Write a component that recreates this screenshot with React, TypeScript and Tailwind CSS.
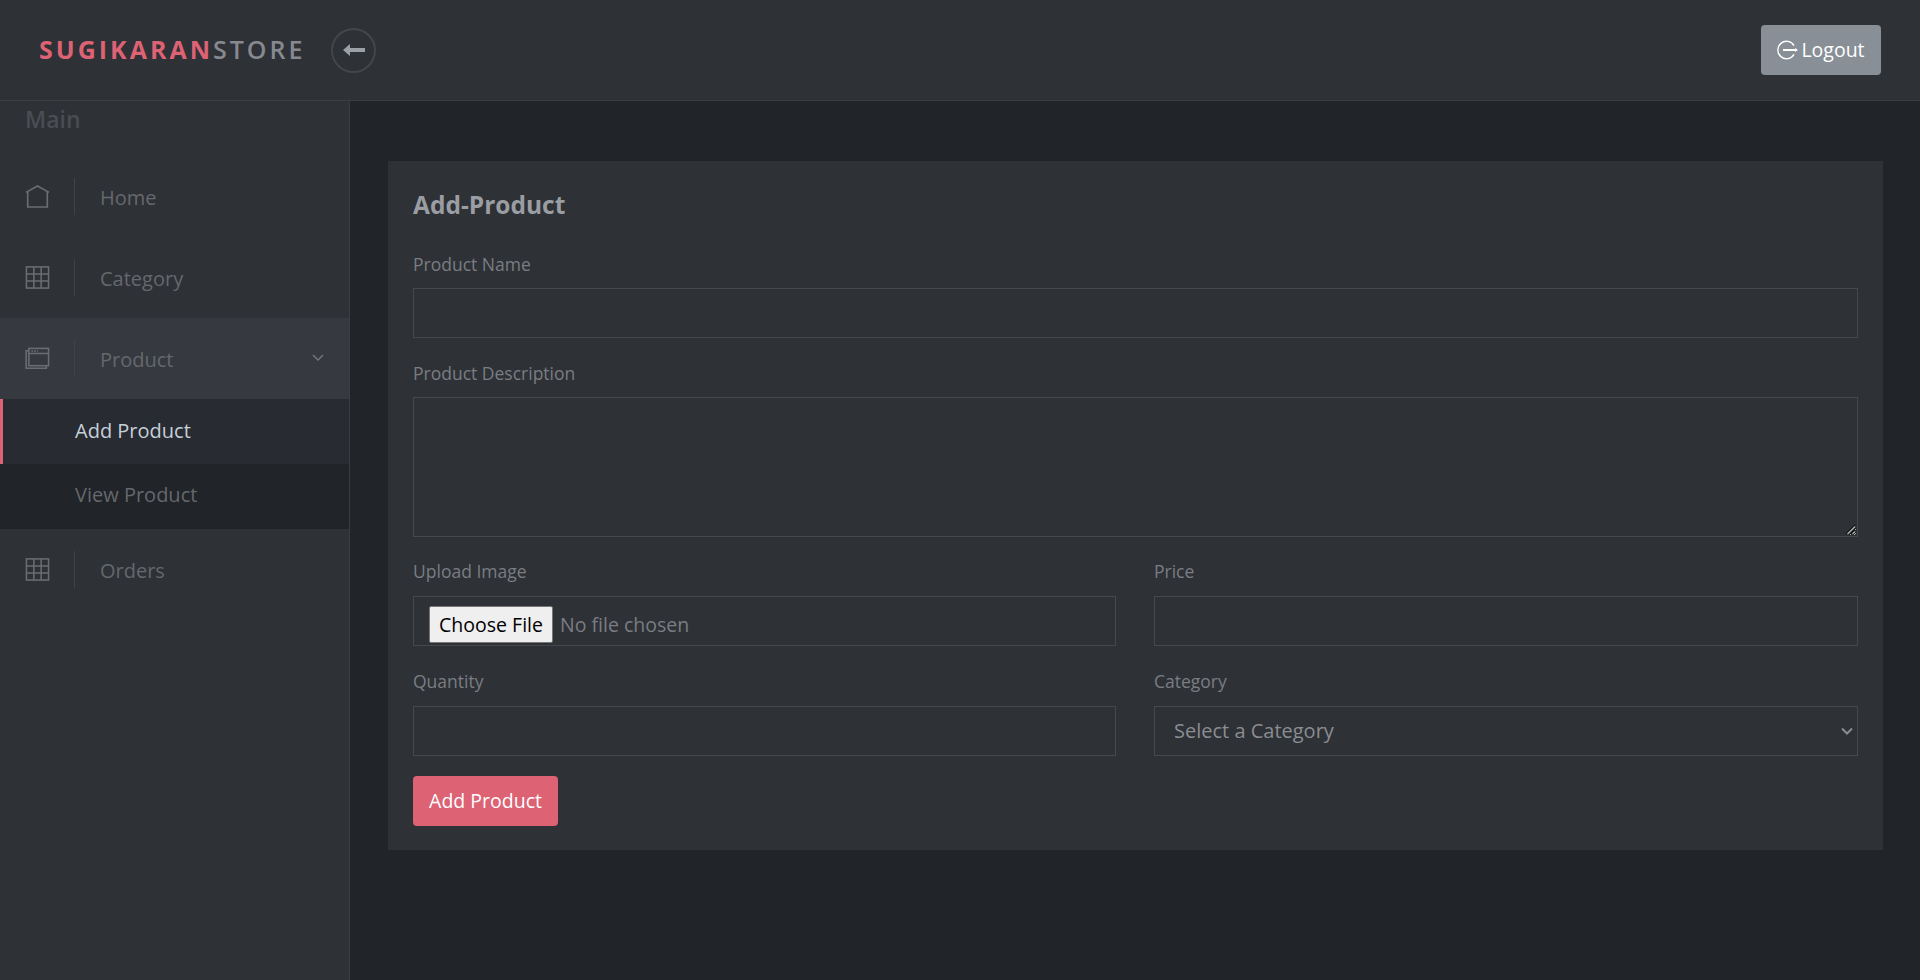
function HomeIcon() {
  return (
    <svg width="26" height="26" viewBox="0 0 26 26" fill="none" stroke="#6a6d72" strokeWidth="1.7">
      <path d="M1 9.2 13 2.6l12 6.6" />
      <path d="M2.8 8.2V24.4h20.4V8.2" />
    </svg>
  )
}

function GridIcon() {
  return (
    <svg width="26" height="26" viewBox="0 0 26 26" fill="none" stroke="#6a6d72" strokeWidth="1.6">
      <rect x="1.5" y="2.5" width="23" height="22" />
      <path d="M9.2 2.5v22M16.8 2.5v22M1.5 9.8h23M1.5 17.2h23" />
    </svg>
  )
}

function WindowsIcon() {
  return (
    <svg width="26" height="26" viewBox="0 0 26 26" fill="none" stroke="#6a6d72" strokeWidth="1.6">
      <rect x="4" y="3" width="20.5" height="18" />
      <path d="M4 8.3h20.5" />
      <path d="M6.5 5.7h7" strokeDasharray="2 1" />
      <path d="M4 5.5H1.2V23.7h21V21" />
    </svg>
  )
}

function NavRow({ icon, label, active, chevron }: { icon: React.ReactNode; label: string; active?: boolean; chevron?: boolean }) {
  return (
    <div className={`flex h-[81px] items-center px-[25px] ${active ? 'bg-[#363940]' : ''}`}>
      <span className="flex w-[25px] -translate-y-px justify-center">{icon}</span>
      <span className="ml-[24px] h-[37px] w-px bg-[#3f4247]" />
      <span className="ml-[25px] flex-1 translate-y-px text-[20px] text-[#65686d]">{label}</span>
      {chevron && (
        <svg width="12" height="8" viewBox="0 0 12 8" fill="none" stroke="#74777c" strokeWidth="1.4" className="-translate-y-px">
          <path d="M1 1l5 5 5-5" />
        </svg>
      )}
    </div>
  )
}

function Field({ label, className, children }: { label: string; className?: string; children: React.ReactNode }) {
  return (
    <div className={className}>
      <label className="mb-[10px] block h-[27px] text-[17.5px] leading-[27px] text-[#7a7d83]">{label}</label>
      {children}
    </div>
  )
}

const inputClass = 'block h-[50px] w-full border border-[#45484d] bg-transparent px-[20px] text-[19.5px] text-[#8a8d92] outline-none'

export default function App() {
  return (
    <div className="flex h-[980px] flex-col overflow-hidden bg-[#212428] font-['Open_Sans','Noto_Sans',sans-serif]">
      <header className="flex h-[101px] shrink-0 items-center justify-between border-b border-[#3a3d42] bg-[#2e3136] pl-[39px] pr-[39px]">
        <div className="flex items-center">
          <span className="w-[266px] whitespace-nowrap text-[25px] font-bold tracking-[3px] text-[#dc6274]">
            SUGIKARAN<span className="font-semibold text-[#868a90]">STORE</span>
          </span>
          <button className="ml-[26px] flex h-[45px] w-[45px] items-center justify-center rounded-full border-2 border-[#43464b]">
            <svg width="22" height="14" viewBox="0 0 22 14">
              <path d="M0 7l7-6v4h15v4H7v4z" fill="#9ba0a6" />
            </svg>
          </button>
        </div>
        <button className="flex h-[50px] w-[120px] items-center justify-center gap-[3px] rounded-[4px] bg-[#888f96] text-[19.5px] text-white">
          <svg width="21" height="20" viewBox="0 0 21 20" fill="none" stroke="#fff" strokeWidth="1.4">
            <path d="M17 5.6A8.7 8.7 0 1 0 17 14.4" />
            <path d="M6 10h12" strokeWidth="2" />
            <path d="M18 8v4l3-2z" fill="#fff" stroke="none" />
          </svg>
          Logout
        </button>
      </header>

      <div className="flex flex-1">
        <aside className="w-[350px] shrink-0 border-r border-[#3a3d42] bg-[#2e3136]">
          <div className="h-[55px] pl-[25px] text-[23px] font-semibold leading-[36px] text-[#4a4d53]">Main</div>
          <NavRow icon={<HomeIcon />} label="Home" />
          <NavRow icon={<GridIcon />} label="Category" />
          <NavRow icon={<WindowsIcon />} label="Product" active chevron />
          <div className="flex h-[65px] items-center border-l-[3px] border-[#dc6274] bg-[#292b33] pb-[2px] pl-[72px] text-[20px] text-[#c5d0d8]">
            Add Product
          </div>
          <div className="flex h-[65px] items-center bg-[#212428] pb-[3px] pl-[75px] text-[20px] text-[#65686d]">View Product</div>
          <NavRow icon={<GridIcon />} label="Orders" />
        </aside>

        <main className="flex-1 pl-[38px] pr-[37px] pt-[60px]">
          <form className="flex h-[689px] flex-col bg-[#2e3136] px-[25px] pt-[27px]">
            <h2 className="h-[36px] text-[24.5px] font-bold leading-[34px] text-[#9a9da2]">Add-Product</h2>
            <Field label="Product Name" className="mt-[27px]">
              <input className={inputClass} />
            </Field>
            <Field label="Product Description" className="mt-[22px]">
              <div className="relative">
                <textarea className="block h-[140px] w-full border border-[#45484d] bg-transparent px-[20px] outline-none" />
                <svg width="11" height="11" viewBox="0 0 11 11" className="pointer-events-none absolute bottom-[2px] right-[2px]" fill="none">
                  <path d="M1 10 10 1M6 10l4-4" stroke="#111" strokeWidth="1.2" />
                  <path d="M2.5 10 10 2.5M7.5 10l2.5-2.5" stroke="#b5b5b5" strokeWidth="1.2" />
                </svg>
              </div>
            </Field>
            <div className="mt-[21px] grid grid-cols-[703px_1fr] gap-x-[38px] gap-y-[22px] [&_label]:mb-[11px]">
              <Field label="Upload Image">
                <input
                  type="file"
                  className="block h-[50px] w-full border border-[#45484d] bg-transparent pb-0 pl-[15px] pr-[15px] pt-[9px] text-[19.5px] text-[#7a7d83] outline-none file:mr-[7px] file:h-[37px] file:w-[124px] file:rounded-[2px] file:border file:border-[#767676] file:bg-[#efefef] file:text-[19.5px] file:text-black"
                />
              </Field>
              <Field label="Price">
                <input className={inputClass} />
              </Field>
              <Field label="Quantity">
                <input className={inputClass} />
              </Field>
              <Field label="Category">
                <div className="relative">
                  <select className="block h-[50px] w-full appearance-none border border-[#45484d] bg-transparent px-[19px] text-[20px] text-[#8a8d92] outline-none">
                    <option>Select a Category</option>
                  </select>
                  <svg width="12" height="8" viewBox="0 0 12 8" fill="none" stroke="#8a8d92" strokeWidth="2" className="pointer-events-none absolute right-[5px] top-[21px]">
                    <path d="M1 1.5l5 5 5-5" />
                  </svg>
                </div>
              </Field>
            </div>
            <button type="button" className="mt-[20px] h-[50px] w-[145px] rounded-[4px] bg-[#dc6274] text-[19.5px] text-white">
              Add Product
            </button>
          </form>
        </main>
      </div>
    </div>
  )
}
